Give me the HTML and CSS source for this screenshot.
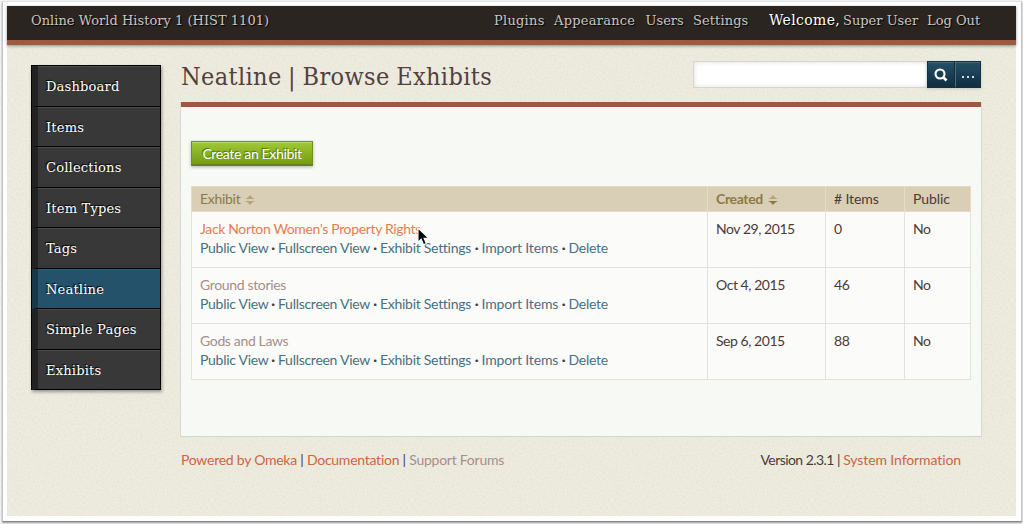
FILE: index.html
```html
<!DOCTYPE html>
<html lang="en">
<head>
<meta charset="utf-8">
<title>Neatline | Browse Exhibits</title>
<link rel="stylesheet" href="styles.css">
</head>
<body>
<div class="window">
<div class="page">
  <header class="topbar">
    <a class="site">Online World History 1 (HIST 1101)</a>
    <nav class="topnav"><a class="plugins">Plugins</a><a class="appearance">Appearance</a><a class="users">Users</a><a class="settings">Settings</a></nav>
    <div class="user"><b>Welcome,</b><a class="super">Super User</a><a class="logout">Log Out</a></div>
  </header>
  <div class="layout">
    <nav class="sidenav">
      <a>Dashboard</a><a>Items</a><a>Collections</a><a>Item Types</a><a>Tags</a><a class="current">Neatline</a><a>Simple Pages</a><a>Exhibits</a>
    </nav>
    <main class="main">
      <div class="heading">
        <h1>Neatline | Browse Exhibits</h1>
        <form class="search">
          <input type="text" aria-label="Search">
          <button type="button" class="go" aria-label="Submit search"><svg width="14" height="14" viewBox="0 0 14 14"><circle cx="6" cy="6" r="4.5" fill="none" stroke="#fff" stroke-width="2.1"/><path d="M9 9l3.5 3.5" stroke="#fff" stroke-width="2.6"/></svg></button>
          <button type="button" class="more" aria-label="Advanced"><svg width="12" height="2" viewBox="0 0 12 2"><path d="M0 0h2v2H0zM5 0h2v2H5zM10 0h2v2h-2z" fill="#d2dde1"/></svg></button>
        </form>
      </div>
      <section class="panel">
        <a class="create"><span>Create an Exhibit</span></a>
        <table>
          <colgroup><col class="c1"><col class="c2"><col class="c3"><col class="c4"></colgroup>
          <thead><tr>
            <th class="sort">Exhibit<svg width="10" height="10" viewBox="0 0 10 10"><path d="M0 4Q3 3 5 0Q7 3 10 4zM0 6Q3 7 5 10Q7 7 10 6z" fill="#b1a57d"/></svg></th>
            <th class="sort active">Created<svg width="10" height="10" viewBox="0 0 10 10"><path d="M0 4Q3 3 5 0Q7 3 10 4z" fill="#b1a57d"/><path d="M0 6Q3 7 5 10Q7 7 10 6z" fill="#8b7a3d"/></svg></th>
            <th># Items</th><th>Public</th>
          </tr></thead>
          <tbody>
            <tr><td><a class="name hover">Jack Norton Women's Property Rights</a><div class="actions"><a class="pv">Public View</a><i>·</i><a class="fv">Fullscreen View</a><i>·</i><a class="es">Exhibit Settings</a><i>·</i><a class="ii">Import Items</a><i>·</i><a>Delete</a></div></td><td>Nov 29, 2015</td><td>0</td><td>No</td></tr>
            <tr><td><a class="name">Ground stories</a><div class="actions"><a class="pv">Public View</a><i>·</i><a class="fv">Fullscreen View</a><i>·</i><a class="es">Exhibit Settings</a><i>·</i><a class="ii">Import Items</a><i>·</i><a>Delete</a></div></td><td>Oct 4, 2015</td><td>46</td><td>No</td></tr>
            <tr><td><a class="name">Gods and Laws</a><div class="actions"><a class="pv">Public View</a><i>·</i><a class="fv">Fullscreen View</a><i>·</i><a class="es">Exhibit Settings</a><i>·</i><a class="ii">Import Items</a><i>·</i><a>Delete</a></div></td><td>Sep 6, 2015</td><td>88</td><td>No</td></tr>
          </tbody>
        </table>
      </section>
      <footer class="foot">
        <p><a>Powered by Omeka</a> | <a>Documentation</a> | <a class="visited">Support Forums</a></p>
        <p class="version"><span>Version 2.3.1 |</span> <a>System Information</a></p>
      </footer>
    </main>
  </div>
</div>
</div>
<svg class="cursor" width="14" height="20" viewBox="0 0 14 20"><path d="M1 1v14.2l3.2-3 2.4 5.6 2.8-1.2-2.4-5.4h4.6z" fill="#000" stroke="#fff" stroke-width="1.1"/></svg>
</body>
</html>
```
FILE: styles.css
```css
* { box-sizing: border-box; }
body { margin: 0; width: 1023px; height: 524px; overflow: hidden; background: #f7f7f7; padding: 1px 1px 2px 2px; color: #4a3a3a; font: 14px/19px Lato, sans-serif; }
.window { height: 521px; background: #fff; border: 1px solid #c4c4c4; border-top-color: #e4e4e4; border-bottom: 1px solid #858585; padding: 4px 5px 4px 4px; box-shadow: 0 1px 2px #999; }
.page { height: 510px; background: #eeecdf url("data:image/svg+xml,%3Csvg xmlns='http://www.w3.org/2000/svg' width='200' height='200'%3E%3Cfilter id='n'%3E%3CfeTurbulence type='fractalNoise' baseFrequency='.55' numOctaves='2' stitchTiles='stitch'/%3E%3CfeColorMatrix values='0 0 0 0 .35 0 0 0 0 .33 0 0 0 0 .25 .25 0 0 0 -.1'/%3E%3C/filter%3E%3Crect width='200' height='200' filter='url(%23n)'/%3E%3C/svg%3E"); }
.topbar { height: 39px; background: #2b2521; border-bottom: 5px solid #9d5a40; box-shadow: 0 1px 3px rgba(0,0,0,.4); padding: 0 34px 0 24px; display: flex; font: 13px/29px "DejaVu Serif", serif; color: #c9c6c2; text-shadow: 1px 1px 1px #000; white-space: nowrap; }
.topbar a, .topbar b { font-weight: 400; }
.site { letter-spacing: .02px; margin-right: auto; }
.topnav { letter-spacing: .25px; }
.topnav a { display: inline-block; }
.topnav .plugins { width: 60px; }
.topnav .appearance { width: 91.5px; }
.topnav .users { width: 47.5px; letter-spacing: 0; }
.topnav .settings { width: 76px; letter-spacing: .1px; }
.user { width: 213px; display: flex; }
.user b { color: #fff; width: 74px; font-size: 14px; letter-spacing: .35px; }
.user .super { width: 84px; letter-spacing: 0; }
.user .logout { letter-spacing: 0; }
.layout { display: flex; padding: 20px 34px 0 24px; }
.sidenav { width: 130px; height: 325px; margin-right: 20px; border: 1px solid #000; border-bottom: 0; box-shadow: 1px 2px 3px rgba(0,0,0,.35); flex: none; }
.sidenav a { display: block; height: 40.5px; border-bottom: 1px solid #000; border-left: 6px solid #222; background: #383838; box-shadow: inset 0 1px #4c4c4c; padding-left: 8px; font: 13px/42px "DejaVu Serif", serif; color: #fff; text-shadow: -1px -1px 1px #000; letter-spacing: .2px; white-space: nowrap; }
.sidenav .current { background: #23526a; border-left-color: #17384a; box-shadow: inset 0 1px #2e6078; }
.main { width: 800px; }
.heading { height: 37px; display: flex; justify-content: space-between; }
h1 { margin: -5px 0 0; font: 25px/33px "DejaVu Serif Condensed", "DejaVu Serif", serif; letter-spacing: .37px; word-spacing: -1px; color: #523f40; white-space: nowrap; }
.search { display: flex; margin: -4px 0 0; height: 27px; }
.search input { width: 234px; height: 27px; margin: 0; border: 1px solid #d6d5d2; border-right: 0; border-radius: 0; background: #fff; box-shadow: inset 0 0 5px #ddd; padding: 0; }
.search button { height: 27px; margin: 0; border: 1px solid #123044; border-bottom-width: 2px; border-radius: 0; background: linear-gradient(#245069, #122f42); box-shadow: inset 0 1px #40687c, 0 1px 3px rgba(0,0,0,.15); padding: 0; display: flex; align-items: center; justify-content: center; }
.search .go { width: 28px; }
.search .go svg { margin-top: 2px; }
.search .more { width: 26px; border-left-color: #496f80; }
.search .more svg { margin-top: 6px; }
.panel { height: 335px; border-top: 5px solid #9d5a40; background: #f7faf4; border-bottom: 1px solid #d3d5c8; box-shadow: 1px 0 #dcdacd, -1px 0 #dcdacd; padding: 34px 10px 0; display: flow-root; }
.create { display: flex; align-items: center; justify-content: center; width: 122px; height: 25px; border: 1px solid #6f941b; border-bottom: 2px solid #668614; background: linear-gradient(#a0c936, #769c13); box-shadow: inset 0 1px #b8dc55, 0 1px 3px rgba(0,0,0,.3); color: #fff; text-shadow: -1px -1px 1px #4f700b; white-space: nowrap; }
.create span { letter-spacing: -.35px; }
table { width: 780px; margin-top: 20px; border-collapse: collapse; table-layout: fixed; background: #fbfbf9; }
.c1 { width: 516px; }
.c2 { width: 118px; }
.c3 { width: 79px; }
.c4 { width: 66px; }
th, td { border: 1px solid #e2e1de; padding: 0 8px; text-align: left; white-space: nowrap; }
th { height: 25px; border-color: #e5dbc7; background: #d9ceb6; font-weight: 400; line-height: 20px; letter-spacing: -.1px; }
td { height: 56px; vertical-align: top; padding-top: 7px; letter-spacing: -.45px; }
.sort { color: #8a7b45; letter-spacing: -.3px; }
.sort svg { margin-left: 5px; vertical-align: -1px; }
.sort.active { font-weight: 700; letter-spacing: -.35px; }
.name { display: block; color: #a58f8a; letter-spacing: -.35px; }
.name.hover { color: #e57c51; }
.actions { display: flex; color: #4a3a3a; letter-spacing: -.28px; }
.actions a { color: #467083; }
.actions i { width: 10px; text-align: center; font-style: normal; font-weight: 700; }
.pv { width: 68px; }
.fv { width: 92px; }
.es { width: 91.5px; }
.ii { width: 77px; letter-spacing: -.15px; }
.foot { display: flex; justify-content: space-between; padding: 13px 20px 0 0; letter-spacing: -.25px; }
.foot p { margin: 0; white-space: nowrap; }
.foot a { color: #cb6640; }
.foot .visited { color: #a58f8a; }
.version span { letter-spacing: -.55px; }
.version a { letter-spacing: -.1px; }
.cursor { position: absolute; left: 417px; top: 227px; }
```
